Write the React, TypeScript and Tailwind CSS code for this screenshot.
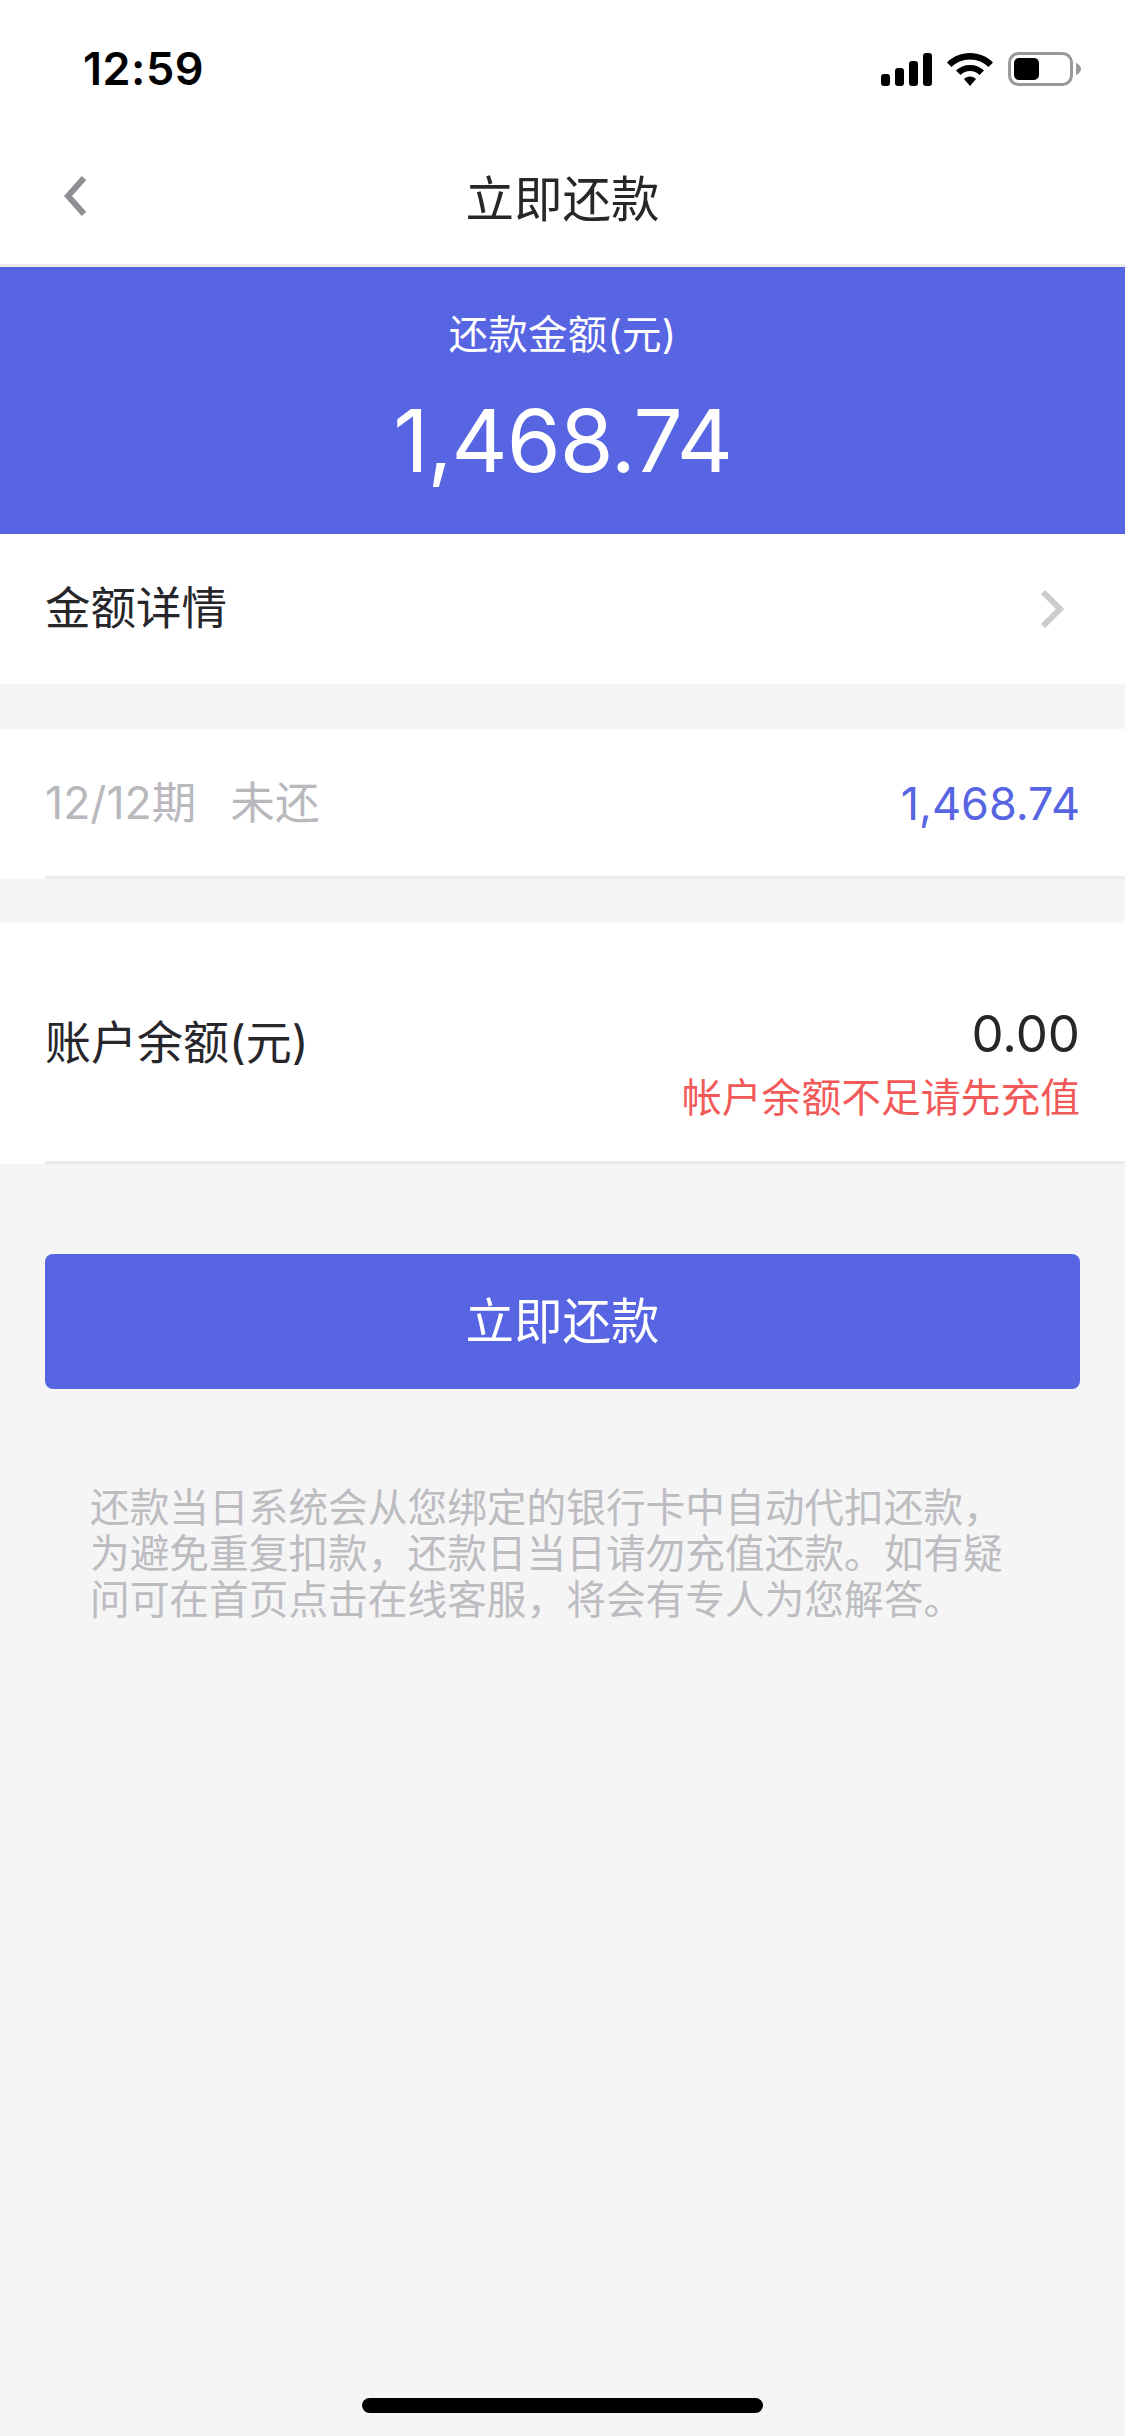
import React from "react";

const font = { fontFamily: '"Inter","Noto Sans CJK SC",sans-serif' };

function Row({ children, className }: { children: React.ReactNode; className: string }) {
  return (
    <div className={`bg-white shrink-0 ${className}`}>
      <div className="ml-[45px] h-full flex items-center justify-between pr-[45px] border-b-[3px] border-[#ebebeb]">{children}</div>
    </div>
  );
}

export default function App() {
  return (
    <div style={font} className="w-[1125px] h-[2436px] bg-[#f5f5f5] flex flex-col relative overflow-hidden">
      <div className="h-[112px] bg-white flex items-center justify-between pl-[83px] pr-[44px] pt-[26px] shrink-0">
        <span className="text-[45px] font-semibold text-black tracking-[0.5px]">12:59</span>
        <div className="flex items-center gap-[15px]">
          <svg width="51" height="33" viewBox="0 0 51 33" fill="#000">
            <rect x="0" y="21" width="9" height="12" rx="3" />
            <rect x="14" y="15" width="9" height="18" rx="3" />
            <rect x="28" y="8" width="9" height="25" rx="3" />
            <rect x="42" y="0" width="9" height="33" rx="3" />
          </svg>
          <svg width="46" height="33" viewBox="0 0 46 33" fill="#000">
            <path d="M23 0C14 0 6 3.500 0 9.500L4.500 14C9 9.500 15.500 6.500 23 6.500S37 9.500 41.500 14L46 9.500C40 3.500 32 0 23 0Z" />
            <path d="M23 12C17.500 12 12.500 14 9 17.500L13.500 22C16 19.500 19.500 18 23 18S30 19.500 32.500 22L37 17.500C33.500 14 28.500 12 23 12Z" />
            <path d="M23 23.500C20.500 23.500 18.500 24.500 17 26L23 33L29 26C27.500 24.500 25.500 23.500 23 23.500Z" />
          </svg>
          <svg width="73" height="34" viewBox="0 0 73 34">
            <rect x="1.500" y="1.500" width="62" height="31" rx="9" fill="none" stroke="#999999" strokeWidth="3" />
            <rect x="6" y="6" width="25" height="22" rx="5" fill="#000" />
            <path d="M68 11v12c3-1 5-3.500 5-6s-2-5-5-6z" fill="#999999" />
          </svg>
        </div>
      </div>

      <div className="h-[155px] bg-white border-b-[3px] border-[#ebebeb] relative flex items-center justify-center shrink-0 pt-[24px]">
        <svg className="absolute left-[62px] top-[63px]" width="26" height="42" viewBox="0 0 26 42" fill="none">
          <path d="M22 3L6 21l16 18" stroke="#8e8e93" strokeWidth="6" />
        </svg>
        <span className="text-[48.500px] text-[#26262b]">立即还款</span>
      </div>

      <div className="h-[267px] bg-[#5865e3] flex flex-col items-center text-white shrink-0">
        <span className="text-[39.500px] leading-[52px] mt-[42px] font-normal tracking-[0.2px]">还款金额(元)</span>
        <span className="text-[87px] leading-[100px] mt-[30px] font-normal tracking-[-1px]">1,468.74</span>
      </div>

      <div className="h-[150px] bg-white flex items-center justify-between pl-[45px] pr-[60px] shrink-0">
        <span className="text-[45.500px] text-[#26262b]">金额详情</span>
        <svg width="26" height="40" viewBox="0 0 26 40" fill="none">
          <path d="M4 3l17 17L4 37" stroke="#cccccc" strokeWidth="6" />
        </svg>
      </div>

      <Row className="h-[150px] mt-[45px]">
        <span className="text-[44.600px] text-[#b8b8bd] font-normal pt-[2px]">12/12期<span className="ml-[34px]">未还</span></span>
        <span className="text-[45px] text-[#5865e3] font-normal pt-[2px]">1,468.74</span>
      </Row>

      <Row className="h-[241px] mt-[44px]">
        <span className="text-[46px] text-[#26262b]">账户余额(元)</span>
        <div className="flex flex-col items-end pt-[44px]">
          <span className="text-[51px] leading-[62px] text-[#26262b] font-normal">0.00</span>
          <span className="text-[39.800px] leading-[56px] text-[#f25a5a] mt-[5px]">帐户余额不足请先充值</span>
        </div>
      </Row>

      <div className="mx-[45px] mt-[90px] h-[135px] rounded-[8px] bg-[#5865e3] flex items-center justify-center text-white text-[48.500px] shrink-0 pt-[2px]">
        立即还款
      </div>

      <p className="mx-[90px] mt-[96px] text-[39.700px] leading-[46px] text-[#bcbcc1] font-normal">
        还款当日系统会从您绑定的银行卡中自动代扣还款，为避免重复扣款，还款日当日请勿充值还款。如有疑问可在首页点击在线客服，将会有专人为您解答。
      </p>

      <div className="absolute left-[362px] bottom-[23px] w-[401px] h-[15px] rounded-full bg-black" />
    </div>
  );
}
